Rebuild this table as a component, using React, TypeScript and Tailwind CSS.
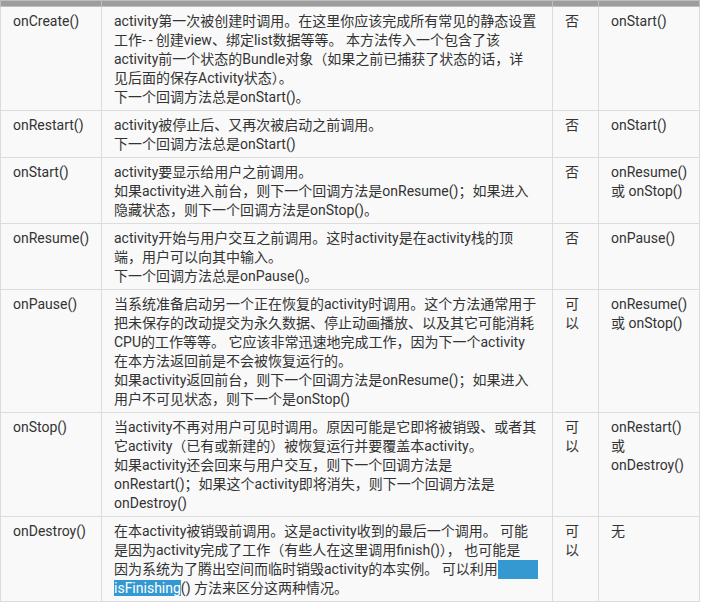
import type { ReactNode } from "react";

type Row = {
  method: string;
  desc: ReactNode[];
  killable: string;
  next: string[];
};

const rows: Row[] = [
  {
    method: "onCreate()",
    desc: [
      "activity第一次被创建时调用。在这里你应该完成所有常见的静态设置",
      <>
        工作<span className="tracking-[3px]">--</span>创建view、绑定list数据等等。 本方法传入一个包含了该
      </>,
      "activity前一个状态的Bundle对象（如果之前已捕获了状态的话，详",
      "见后面的保存Activity状态）。",
      "下一个回调方法总是onStart()。",
    ],
    killable: "否",
    next: ["onStart()"],
  },
  {
    method: "onRestart()",
    desc: ["activity被停止后、又再次被启动之前调用。", "下一个回调方法总是onStart()"],
    killable: "否",
    next: ["onStart()"],
  },
  {
    method: "onStart()",
    desc: [
      "activity要显示给用户之前调用。",
      "如果activity进入前台，则下一个回调方法是onResume()；如果进入",
      "隐藏状态，则下一个回调方法是onStop()。",
    ],
    killable: "否",
    next: ["onResume()", "或 onStop()"],
  },
  {
    method: "onResume()",
    desc: [
      "activity开始与用户交互之前调用。这时activity是在activity栈的顶",
      "端，用户可以向其中输入。",
      "下一个回调方法总是onPause()。",
    ],
    killable: "否",
    next: ["onPause()"],
  },
  {
    method: "onPause()",
    desc: [
      "当系统准备启动另一个正在恢复的activity时调用。这个方法通常用于",
      "把未保存的改动提交为永久数据、停止动画播放、以及其它可能消耗",
      "CPU的工作等等。 它应该非常迅速地完成工作，因为下一个activity",
      "在本方法返回前是不会被恢复运行的。",
      "如果activity返回前台，则下一个回调方法是onResume()；如果进入",
      "用户不可见状态，则下一个是onStop()",
    ],
    killable: "可以",
    next: ["onResume()", "或 onStop()"],
  },
  {
    method: "onStop()",
    desc: [
      "当activity不再对用户可见时调用。原因可能是它即将被销毁、或者其",
      "它activity（已有或新建的）被恢复运行并要覆盖本activity。",
      "如果activity还会回来与用户交互，则下一个回调方法是",
      "onRestart()；如果这个activity即将消失，则下一个回调方法是",
      "onDestroy()",
    ],
    killable: "可以",
    next: ["onRestart()", "或", "onDestroy()"],
  },
  {
    method: "onDestroy()",
    desc: [
      "在本activity被销毁前调用。这是activity收到的最后一个调用。 可能",
      "是因为activity完成了工作（有些人在这里调用finish()）， 也可能是",
      <>
        因为系统为了腾出空间而临时销毁activity的本实例。 可以利用
        <span className="inline-block w-[40px] h-[19px] align-top bg-[#3399d0]" />
      </>,
      <>
        <span className="bg-[#3399d0] text-white">isFinishing</span>() 方法来区分这两种情况。
      </>,
    ],
    killable: "可以",
    next: ["无"],
  },
];

const cell = "border border-[#dcdcdc] align-top px-3 pt-[5px] pb-[3px]";
const line = "h-[19px] leading-[19px] whitespace-nowrap";

export default function App() {
  return (
    <div className="w-[705px] h-[606px] bg-white font-['Roboto','Noto_Sans_CJK_SC',sans-serif] text-[14px] leading-[19px] text-[#333]">
      <table className="border-collapse w-[699px] table-fixed bg-[#f9f9f9]">
        <colgroup>
          <col className="w-[101px]" />
          <col className="w-[451px]" />
          <col className="w-[46px]" />
          <col className="w-[101px]" />
        </colgroup>
        <thead>
          <tr className="h-[6px] bg-[#9d9d9d]">
            <th className="border border-[#bdbdbd] p-0" />
            <th className="border border-[#bdbdbd] p-0" />
            <th className="border border-[#bdbdbd] p-0" />
            <th className="border border-[#bdbdbd] p-0" />
          </tr>
        </thead>
        <tbody>
          {rows.map((row) => (
            <tr key={row.method}>
              <td className={cell}>
                <div className={line}>{row.method}</div>
              </td>
              <td className={cell}>
                {row.desc.map((text, i) => (
                  <div key={i} className={line}>
                    {text}
                  </div>
                ))}
              </td>
              <td className={cell}>
                {row.killable.split("").map((ch) => (
                  <div key={ch} className={line}>
                    {ch}
                  </div>
                ))}
              </td>
              <td className={cell}>
                {row.next.map((text) => (
                  <div key={text} className={line}>
                    {text}
                  </div>
                ))}
              </td>
            </tr>
          ))}
        </tbody>
      </table>
    </div>
  );
}
